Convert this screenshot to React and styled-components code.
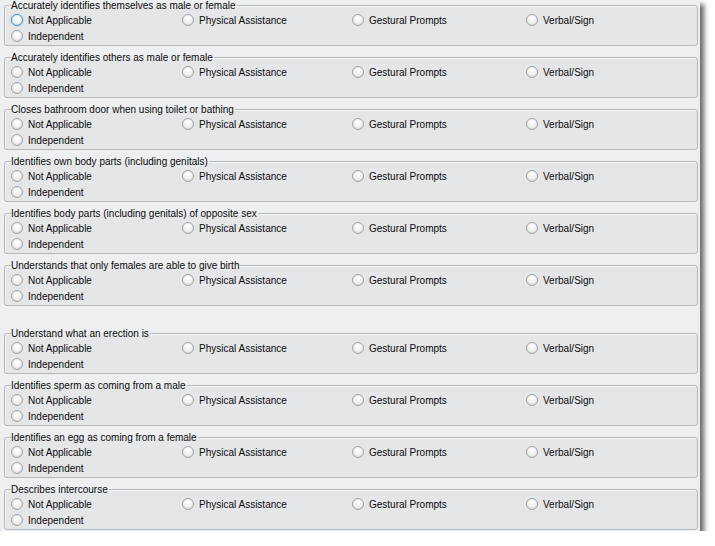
import React from 'react';
import styled, { createGlobalStyle } from 'styled-components';

const GlobalStyle = createGlobalStyle`
  html, body {
    margin: 0;
    padding: 0;
    background: #ffffff;
  }
  body {
    font-family: "Liberation Sans", Arial, sans-serif;
  }
`;

const Window = styled.div`
  width: 700px;
  height: 531px;
  overflow: hidden;
  background: #edeff1;
  box-shadow: 4px 4px 5px rgba(0, 0, 0, 0.6);
`;

// margins collapse between the groups, so the spacer group's top margin is the whole gap
const Group = styled.fieldset`
  margin: ${(p) => (p.$spaced ? '22px' : '0')} 2px 6px 4px;
  padding: 1px 6px 1px 6px;
  min-width: 0;
  border: 1px solid #b4b9be;
  border-radius: 3px;
  background: #e4e6e8;
  box-shadow: inset 1px 1px 0 #f6f7f8;
`;

const Legend = styled.legend`
  padding: 0 1px 0 0;
  font-size: 10px;
  line-height: 11px;
  color: #0a0a0a;
`;

const Options = styled.div`
  display: grid;
  grid-template-columns: 171px 170px 174px 1fr;
  grid-auto-rows: 16px;
`;

const Option = styled.label`
  display: flex;
  align-items: center;
  gap: 5px;
  font-size: 10px;
  color: #0c0c0c;
  white-space: nowrap;
`;

const Radio = styled.span`
  width: 12px;
  height: 12px;
  flex: none;
  box-sizing: border-box;
  border-radius: 50%;
  border: 1px solid ${(p) => (p.$hot ? '#3d95d0' : '#9da2a7')};
  background: radial-gradient(circle at 50% 35%, #ffffff 0%, #f3f3f3 45%, #d4d4d4 100%);
  box-shadow: ${(p) => (p.$hot ? '0 0 1px 0.5px #8fcdf2' : 'none')};
`;

const choices = [
  'Not Applicable',
  'Physical Assistance',
  'Gestural Prompts',
  'Verbal/Sign',
  'Independent',
];

const skills = [
  'Accurately identifies themselves as male or female',
  'Accurately identifies others as male or female',
  'Closes bathroom door when using toilet or bathing',
  'Identifies own body parts (including genitals)',
  'Identifies body parts (including genitals) of opposite sex',
  'Understands that only females are able to give birth',
  'Understand what an erection is',
  'Identifies sperm as coming from a male',
  'Identifies an egg as coming from a female',
  'Describes intercourse',
];

const App = () => {
  return (
    <>
      <GlobalStyle />
      <Window>
        {skills.map((skill, i) => (
          <Group key={skill} $spaced={i === 6}>
            <Legend>{skill}</Legend>
            <Options>
              {choices.map((c, j) => (
                <Option key={c}>
                  <Radio $hot={i === 0 && j === 0} />
                  {c}
                </Option>
              ))}
            </Options>
          </Group>
        ))}
      </Window>
    </>
  );
};

export default App;
